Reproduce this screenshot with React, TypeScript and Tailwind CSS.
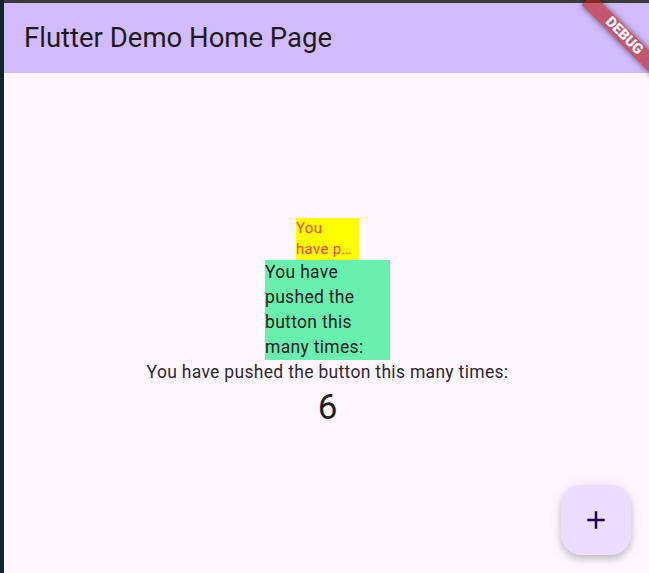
const roboto = { fontFamily: "Roboto, 'Noto Sans', sans-serif" };

const DebugBanner = () => (
  <div className="pointer-events-none absolute left-[568px] top-[25px] flex h-[16px] w-[104px] rotate-45 items-center justify-center bg-[rgba(183,28,28,0.63)] shadow-[0_0_6px_rgba(0,0,0,0.5)]">
    <span className="text-[14.5px] font-black leading-none text-white">DEBUG</span>
  </div>
);

const AddIcon = () => (
  <svg width="30" height="30" viewBox="0 0 24 24" fill="#21005d">
    <path d="M19 13h-6v6h-2v-6H5v-2h6V5h2v6h6v2z" />
  </svg>
);

export default function App() {
  return (
    <div className="h-[573px] w-[649px] overflow-hidden bg-[#3b3b3d]" style={roboto}>
      <div className="flex h-full">
        <div className="w-[4px] shrink-0 bg-[#15222a]" />
        <div className="relative mt-[3px] flex h-[572px] w-[647px] shrink-0 flex-col bg-[#fef7ff] text-[#1d1b20]">
          <header className="flex h-[70px] shrink-0 items-center bg-[#d3bcfd] px-5">
            <h1 className="text-[27.5px] font-normal leading-none">Flutter Demo Home Page</h1>
          </header>

          <main className="flex flex-1 flex-col items-center justify-center">
            <div className="w-[63px] bg-[#ffff00] text-[15px] leading-[21px] tracking-[0.3px] text-[#f44336]">
              <div className="whitespace-nowrap">You</div>
              <div className="whitespace-nowrap">have p…</div>
            </div>
            <div className="w-[125px] bg-[#69f0ae] text-[17.5px] leading-[25px] tracking-[0.3125px]">
              You have pushed the button this many times:
            </div>
            <p className="text-[17.5px] leading-[25px] tracking-[0.3125px] text-[#2b2930]">
              You have pushed the button this many times:
            </p>
            <p className="text-[35px] leading-[45px]">6</p>
          </main>

          <button className="absolute bottom-[20px] right-[20px] flex h-[70px] w-[70px] items-center justify-center rounded-[20px] bg-[#eaddff] shadow-[0_4px_6px_rgba(0,0,0,0.18),0_1px_14px_rgba(0,0,0,0.1)]">
            <AddIcon />
          </button>

          <DebugBanner />
        </div>
      </div>
    </div>
  );
}
